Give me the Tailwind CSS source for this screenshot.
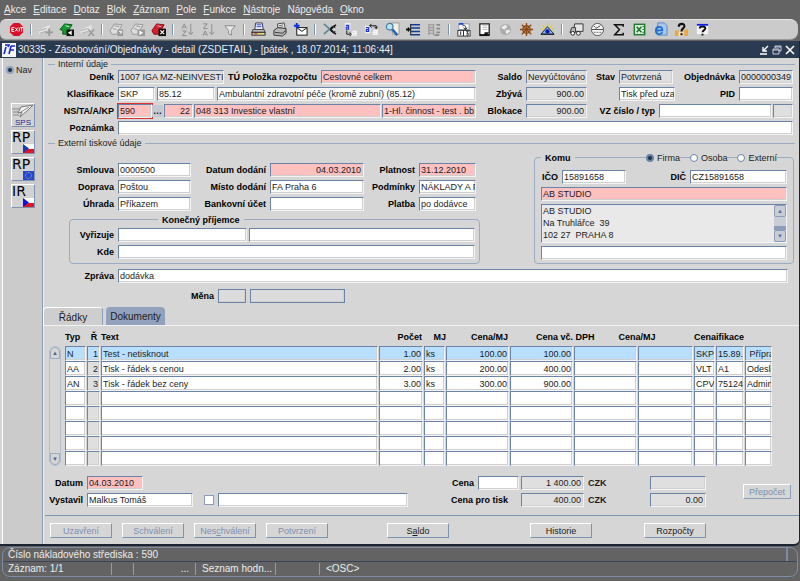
<!DOCTYPE html>
<html lang="cs">
<head>
  <meta charset="UTF-8" />
  <meta name="viewport" content="width=device-width, initial-scale=1.0" />
  <title>Zásobování/Objednávky - detail</title>
  <script src="https://cdn.jsdelivr.net/npm/@tailwindcss/browser@4"></script>
</head>

<body class="min-h-screen bg-[#636363] font-['Liberation_Sans',Arial,sans-serif] text-[9px] leading-3 text-[#1c1c1c] [&_u]:underline-offset-1">

  <!-- Menu -->
  <nav class="flex items-center gap-[7px] h-[19px] pl-1 text-[10px] text-[#ececec]">
    <a href="#"><u>A</u>kce</a>
    <a href="#"><u>E</u>ditace</a>
    <a href="#"><u>D</u>otaz</a>
    <a href="#"><u>B</u>lok</a>
    <a href="#"><u>Z</u>áznam</a>
    <a href="#"><u>P</u>ole</a>
    <a href="#"><u>F</u>unkce</a>
    <a href="#"><u>N</u>ástroje</a>
    <a href="#">Náp<u>o</u>věda</a>
    <a href="#"><u>O</u>kno</a>
  </nav>

  <!-- Toolbar -->
  <div class="flex items-center h-[21px] mr-[2px] pl-[6px] bg-[#cbcbcb] rounded-l-md rounded-r-lg border-y border-t-[#e6e6e6] border-b-[#9a9a9a] [&_button]:w-[21px] [&_button]:shrink-0 [&_button]:flex [&_button]:justify-center [&_svg]:w-[15px] [&_svg]:h-[15px] [&_hr]:w-[2px] [&_hr]:h-[11px] [&_hr]:mx-[3px] [&_hr]:border-0 [&_hr]:border-l [&_hr]:border-[#7d93b2] [&_hr]:bg-white [&_hr]:shrink-0">
    <button aria-label="Exit"><svg viewBox="0 0 16 16"><path d="M5 1h6l4 4v6l-4 4H5l-4-4V5z" fill="#d8102a"/><path d="M3 6h2.500M3 8h2M3 10h2.500M3 6v4M6.500 6l3 4M9.500 6l-3 4M11 6v4M12 6h3M13.500 6v4" stroke="#fff" fill="none"/></svg></button>
    <hr>
    <button aria-label="Vložit záznam"><svg viewBox="0 0 16 16"><path d="M1 8l12-5-1 5-11 5z" fill="#e4e4e4"/><path d="M1 9l8-2M2 12l6-2" stroke="#aaa"/><path d="M12 7v8M8 11h8" stroke="#9a9a9a" stroke-width="2"/></svg></button>
    <button aria-label="Nový záznam"><svg viewBox="0 0 16 16"><path d="M1 8l5-6 8 1-2 3-4 7H4V9z" fill="#159a32" stroke="#0b5a1c"/><path d="M7 4l4 1" stroke="#d8ffd8"/><rect x="8" y="8" width="8" height="7" fill="#111"/><path d="M13.500 9v5l-4-2.500z" fill="#fff"/></svg></button>
    <button aria-label="Smazat záznam"><svg viewBox="0 0 16 16"><path d="M1 8l12-5-1 5-11 5z" fill="#e4e4e4"/><path d="M1 9l8-2M2 12l6-2" stroke="#aaa"/><path d="M9 8l6 7M15 8l-6 7" stroke="#999" stroke-width="1.500"/></svg></button>
    <hr>
    <button aria-label="Zadat dotaz"><svg viewBox="0 0 16 16"><path d="M1 9l5-7 8 1-3 5-3 5H3z" fill="#ddd" stroke="#999"/><path d="M6 4l5 1M4 7l4 1" stroke="#999"/><rect x="9" y="8" width="6" height="7" fill="#999"/><path d="M10.500 10h3v1.500h-1.500v1" stroke="#fff" fill="none"/></svg></button>
    <button aria-label="Provést dotaz"><svg viewBox="0 0 16 16"><path d="M1 9l5-7 8 1-3 5-3 5H3z" fill="#ddd" stroke="#999"/><path d="M6 4l5 1M4 7l4 1" stroke="#999"/><rect x="8" y="8" width="8" height="7" fill="#999"/><path d="M10 9v5l4-2.500z" fill="#fff"/></svg></button>
    <button aria-label="Zrušit dotaz"><svg viewBox="0 0 16 16"><path d="M1 9l5-7 8 1-3 5-3 5H3z" fill="#d8202c" stroke="#8b0f18"/><path d="M7 4l4 1" stroke="#ffc0c0"/><rect x="8" y="7" width="8" height="8" fill="#111"/><path d="M10 9l4 4M14 9l-4 4" stroke="#fff" stroke-width="1.300"/></svg></button>
    <hr>
    <button aria-label="Třídit vzestupně"><svg viewBox="0 0 16 16" fill="none" stroke="#8c8c8c"><path d="M2 7l2.500-5L7 7M3 5.500h3M2.500 9.500h4l-4 5h4.500M11.500 2v11M9 10.500l2.500 3 2.500-3"/></svg></button>
    <button aria-label="Třídit sestupně"><svg viewBox="0 0 16 16" fill="none" stroke="#8c8c8c"><path d="M2.500 2h4l-4 5h4.500M2 14.500l2.500-5 2.500 5M3 13h3M11.500 2v11M9 10.500l2.500 3 2.500-3"/></svg></button>
    <button aria-label="Filtr"><svg viewBox="0 0 16 16"><path d="M3 4h11l-4 5v5l-3-1.500V9z" fill="#e8e8e8" stroke="#888"/></svg></button>
    <hr>
    <button aria-label="Tisk"><svg viewBox="0 0 16 16"><path d="M5 1h7l1 7H4z" fill="#eef" stroke="#335"/><path d="M6 3h5M6 5h5" stroke="#24c"/><path d="M2 8h12l1 3H1z" fill="#bbb" stroke="#444"/><rect x="1" y="11" width="14" height="3" fill="#e8e3c4" stroke="#222"/><path d="M3 12.500h4" stroke="#d22"/><path d="M8 12.500h4" stroke="#dd0"/></svg></button>
    <button aria-label="Tisk obrazovky"><svg viewBox="0 0 16 16"><path d="M6 2l7-1 1 6-8 2z" fill="#fff" stroke="#444"/><path d="M7 4l5-1M7 6l5-1" stroke="#555"/><path d="M2 9l4-3 9 1v5l-4 3-9-1z" fill="#b9b9b9" stroke="#333"/><path d="M3 11l8 1M11 12l4-3" stroke="#333"/></svg></button>
    <button aria-label="Pošta"><svg viewBox="0 0 16 16"><rect x="4" y="6" width="11" height="8" fill="#fff" stroke="#111"/><path d="M4 6l5.500 4L15 6" fill="none" stroke="#111"/><path d="M4 1v6M1 4h6" stroke="#1030e0" stroke-width="2"/></svg></button>
    <hr>
    <button aria-label="Vyjmout"><svg viewBox="0 0 16 16" fill="none"><path d="M2 2l9 8M2 13l9-8" stroke="#5d8a92" stroke-width="1.800"/><path d="M9 8l3-3M9 8l3 3" stroke="#111" stroke-width="2"/><path d="M12 5l3-2M12 11l3 2M12 4l2 2M12 12l2-2" stroke="#111" stroke-width="1.500"/></svg></button>
    <button aria-label="Kopírovat"><svg viewBox="0 0 16 16" fill="none"><rect x="2" y="1" width="6" height="7" fill="#eef"/><path d="M3 3.500h3v4H3.500v-2H6" stroke="#2438d8" stroke-width="1.300"/><path d="M4 9v4h4M7 11l2 2-2 2" stroke="#111"/><path d="M10 10h4v4h-4v-2h4" stroke="#f6f6f6" stroke-width="1.500"/></svg></button>
    <button aria-label="Vložit"><svg viewBox="0 0 16 16" fill="none"><rect x="1" y="4" width="6" height="8" fill="#eef"/><path d="M2 6h3v4H2.500V8H5" stroke="#2438d8" stroke-width="1.300"/><path d="M6 4h7v3M8 2L6 4l2 2M11 5l2 2 1.500-2" stroke="#111"/><path d="M10 9h4v4h-4v-2h4" stroke="#f6f6f6" stroke-width="1.500"/></svg></button>
    <button aria-label="Hledat"><svg viewBox="0 0 16 16"><path d="M7 1h8v12H8z" fill="#f1efe6" stroke="#999"/><circle cx="5" cy="5" r="3.500" fill="#b8e4f4" stroke="#4a7c9c" stroke-width="1.300"/><path d="M8 8l5 6" stroke="#2060b8" stroke-width="2.500"/></svg></button>
    <button aria-label="Seznam"><svg viewBox="0 0 16 16"><path d="M5 3h10M5 6.500h10M5 10h10M5 13.500h10" stroke="#123c98" stroke-width="1.600"/><path d="M5 2v12" stroke="#111"/><path d="M0 7h2V5l3 3-3 3V9H0z" fill="#111"/></svg></button>
    <button aria-label="Strom"><svg viewBox="0 0 16 16"><path d="M2 2v12M7 2v12M2 3h5M2 6h5M2 9h5M2 12h5" stroke="#999" stroke-width="1.300"/><path d="M10 3h4M10 7h4M10 11h4M8 14h5" stroke="#8a8a8a" stroke-width="1.800"/></svg></button>
    <hr>
    <button aria-label="Přepočet řádků"><svg viewBox="0 0 16 16"><path d="M3 2h11v6H3z" fill="#fff" stroke="#8a98b0"/><path d="M3 2h5" stroke="#1d4ed0" stroke-width="2"/><rect x="2" y="9" width="13" height="6" fill="#fff" stroke="#333"/><path d="M5 10v4M8 9v6M11 10h2l-1.500 2h1.500v2h-2" stroke="#222" fill="none"/><path d="M7 4c3-1 4 1 3 4M8 6l2 2 2-2" stroke="#111" fill="none"/></svg></button>
    <button aria-label="Poznámky"><svg viewBox="0 0 16 16"><path d="M3 2h10v12H3z" fill="#fff" stroke="#222" stroke-width="1.400"/><path d="M8 11h5l-3 3H8z" fill="#111"/><path d="M6 4h5M6 6h5M6 8h5" stroke="#bbb"/><path d="M3 14h10" stroke="#111" stroke-width="2"/></svg></button>
    <button aria-label="Web"><svg viewBox="0 0 16 16"><circle cx="8" cy="8" r="6" fill="#adadad"/><path d="M4 5l4-2 2 2-3 3-3-1zM8 9l4-1 1 2-4 3z" fill="#ececec"/></svg></button>
    <button aria-label="Kormidlo"><svg viewBox="0 0 16 16" fill="none" stroke="#8a4a12" stroke-width="1.400"><circle cx="8" cy="8" r="4"/><circle cx="8" cy="8" r="1"/><path d="M8 1v14M1 8h14M3 3l10 10M13 3L3 13"/></svg></button>
    <button aria-label="Náhled"><svg viewBox="0 0 16 16"><path d="M8 1v3M3 3l2 3M13 3l-2 3M1 7l2 1M15 7l-2 1" stroke="#e8d000" stroke-width="1.300"/><path d="M1 13L8 5l7 8z" fill="#8fb4f0" stroke="#123"/><circle cx="8" cy="10" r="2.300" fill="#0818a8"/><path d="M1 13h14" stroke="#111"/></svg></button>
    <hr>
    <button aria-label="Doprava"><svg viewBox="0 0 16 16"><path d="M6 2h9v8H5z" fill="#e6e6e6" stroke="#333"/><path d="M3 6h4v5H1z" fill="#bbb" stroke="#333"/><circle cx="4" cy="12" r="2" fill="#fff" stroke="#222"/><circle cx="10" cy="12" r="2" fill="#fff" stroke="#222"/></svg></button>
    <button aria-label="Měření"><svg viewBox="0 0 16 16"><circle cx="8" cy="8" r="6.500" fill="#f4f4f4" stroke="#555"/><path d="M2 8h12M6 7l5-3M4 4l2 2" stroke="#444"/><path d="M4 11h2M7 11h2M10 11h2" stroke="#666"/></svg></button>
    <button aria-label="Součet"><svg viewBox="0 0 16 16"><path d="M13 5V3H4l5 5-5 5.500h9v-2" fill="none" stroke="#111" stroke-width="1.600"/></svg></button>
    <button aria-label="Excel"><svg viewBox="0 0 16 16"><rect x="2.500" y="2.500" width="11" height="11" fill="#e7f4e6" stroke="#1e7a2c" stroke-width="1.600"/><path d="M5 5l5 6M10 5l-5 6" stroke="#1e7a2c" stroke-width="1.800"/><path d="M11 5h2M11 8h2M11 11h2" stroke="#1e7a2c"/></svg></button>
    <button aria-label="Prohlížeč"><svg viewBox="0 0 16 16"><path d="M5 1h7l3 3v10H5z" fill="#a9c6ec" stroke="#5a88c8"/><path d="M3 9h7c0-5-7-5-7 0s5 5 7 2" fill="none" stroke="#1d6fd0" stroke-width="1.800"/></svg></button>
    <button aria-label="Nápověda k bloku"><svg viewBox="0 0 16 16"><path d="M1 9h4v6H1zM11 8h4v7h-4z" fill="#eca73e"/><path d="M5 11h5v4H5z" fill="#f6e6c0"/><path d="M5 5c0-4 7-4 6 0-.5 2-3 2-3 5M8 12v2" stroke="#111" stroke-width="2.200" fill="none"/></svg></button>
    <button aria-label="Nápověda"><svg viewBox="0 0 16 16"><rect x="2" y="2" width="12" height="11" fill="#f4f4f4"/><path d="M2 3h12" stroke="#1220e8" stroke-width="2"/><path d="M5 7c0-3 6-3 6 0-.5 2-3 2-3 4M8 12.500v2" stroke="#111" stroke-width="2" fill="none"/></svg></button>
  </div>

  <!-- Window -->
  <div class="mt-px border-r border-b-2 border-[#1d2533] rounded-br-md bg-[#d6d6d6]">
    <header class="flex items-center gap-[2px] h-[17px] pl-[2px] pr-1 bg-[#2a3a50] text-white text-[10px]">
      <svg class="w-[14px] h-[14px]" viewBox="0 0 14 14"><rect width="14" height="14" fill="#f4f6ff"/><path d="M4 4L2 11M4 1.500v1M7 11L9 3M9 3h4M8 7h4M3 2h4L6 4" stroke="#1426d8" stroke-width="1.600" fill="none"/></svg>
      <h1 class="flex-1 whitespace-nowrap text-[#e8ecf2]">30335 - Zásobování/Objednávky - detail (ZSDETAIL) - [pátek , 18.07.2014; 11:06:44]</h1>
      <button aria-label="Minimalizovat"><svg class="w-[10px] h-[10px]" viewBox="0 0 10 10" fill="none" stroke="#fff"><path d="M9 1L5 5M4 2v4h4M1 9h7" stroke-width="1.400"/></svg></button>
      <button aria-label="Obnovit" class="mx-px"><svg class="w-[10px] h-[10px]" viewBox="0 0 10 10" fill="none" stroke="#ccd"><path d="M3 3V1h6v5H7M1 4h6v5H1zM1 5h6M3 2h6"/></svg></button>
      <button aria-label="Zavřít"><svg class="w-[10px] h-[10px]" viewBox="0 0 10 10" stroke="#fff" stroke-width="1.600"><path d="M1 1l8 8M9 1L1 9"/></svg></button>
    </header>

    <div class="flex">
      <!-- Side panel -->
      <aside class="w-[41px] shrink-0 ml-[2px] pl-[3px] pt-[6px] bg-[#cbcbcb] border-l border-l-white border-r border-r-[#8b9db8] shadow-[1px_0_0_#eee]">
        <label class="flex items-center gap-[2px] h-3"><input type="radio" name="nav" checked class="appearance-none w-[8px] h-[8px] rounded-full border-2 border-[#8fa2be] bg-[#1e3050]">Nav</label>
        <div class="flex flex-col gap-[3px] mt-[27px] ml-[5px] w-6 [&_button]:h-6 [&_button]:border [&_button]:border-t-white [&_button]:border-l-white [&_button]:border-b-[#8093b0] [&_button]:border-r-[#8093b0] [&_button]:bg-[#d2d2d2] [&_svg]:absolute [&_svg]:right-0 [&_svg]:bottom-0 [&_svg]:w-[11px] [&_svg]:h-[9px] [&_button]:relative [&_button]:flex [&_button]:items-start [&_button]:text-black">
          <button aria-label="SPS"><svg class="w-[22px]! h-[14px]! bottom-[8px]!" viewBox="0 0 22 14"><path d="M21 1L9 3l-3 6 4-1-2 5 8-7z" fill="#f4f4f4" stroke="#777"/><path d="M0 5h8M1 8h5M1 11h6M9 8l8-5" stroke="#888"/></svg><span class="mt-auto w-full text-center text-[8px] leading-[7px] text-[#1c2a90]">SPS</span></button>
          <button class="text-[14px] leading-[13px] font-['DejaVu_Sans']">RP<svg viewBox="0 0 11 9"><path d="M0 0h11v5H0z" fill="#fff"/><path d="M0 5h11v4H0z" fill="#d81828"/><path d="M0 0l6 4.500L0 9z" fill="#1c38b8"/></svg></button>
          <button class="text-[14px] leading-[13px] font-['DejaVu_Sans']">RP<svg viewBox="0 0 11 9"><path d="M0 0h11v9H0z" fill="#2448d0"/><circle cx="5.500" cy="4.500" r="3" fill="none" stroke="#c8c860" stroke-dasharray="1 1.300"/></svg></button>
          <button class="text-[14px] leading-[13px] font-['DejaVu_Sans']">IR<svg viewBox="0 0 11 9"><path d="M0 0h11v5H0z" fill="#fff"/><path d="M0 5h11v4H0z" fill="#d81828"/><path d="M0 0l6 4.500L0 9z" fill="#1010e8"/></svg></button>
        </div>
      </aside>

      <!-- Form -->
      <main class="flex-1 min-w-0 [&_.fld]:h-[14px] [&_.fld]:min-w-0 [&_.fld]:pl-px [&_.fld]:border [&_.fld]:border-t-[#6b83a6] [&_.fld]:border-l-[#6b83a6] [&_.fld]:border-b-[#f4f4f4] [&_.fld]:border-r-[#f4f4f4] [&_.fld]:shadow-[inset_-1px_-1px_0_#d0d0d0] [&_.lbl]:font-bold [&_.lbl]:text-right [&_.lbl]:pr-1 [&_.lbl]:whitespace-nowrap [&_.lbl]:shrink-0 [&_.lbl]:text-black">

        <div class="flex items-center gap-[3px] h-3 pl-[5px] pr-1"><span class="w-[7px] h-px bg-[#9aabc2]"></span>Interní údaje<span class="flex-1 h-px bg-[#9aabc2]"></span></div>
        <section class="flex flex-col gap-[3px] pr-[6px]">
          <div class="flex items-center">
            <label for="denik" class="lbl w-[75px]">Deník</label>
            <input id="denik" class="fld w-[106px] bg-[#dfdfdf]" value="1007 IGA MZ-NEINVESTI">
            <label for="tu" class="lbl w-[97px]">TÚ Položka rozpočtu</label>
            <input id="tu" class="fld flex-1 bg-[#ffc0c0]" value="Cestovné celkem">
            <label for="saldo" class="lbl w-[50px]">Saldo</label>
            <input id="saldo" class="fld w-[61px] bg-[#dfdfdf]" value="Nevyúčtováno">
            <label for="stav" class="lbl w-8">Stav</label>
            <input id="stav" class="fld w-[54px] bg-[#dfdfdf]" value="Potvrzená">
            <label for="obj" class="lbl w-[66px]">Objednávka</label>
            <input id="obj" class="fld w-[54px] bg-[#dfdfdf]" value="0000000349">
          </div>
          <div class="flex items-center">
            <label for="klas" class="lbl w-[75px]">Klasifikace</label>
            <input id="klas" class="fld w-[37px] mr-[2px] bg-white" value="SKP">
            <input aria-label="Kód klasifikace" class="fld w-[58px] mr-[2px] bg-white" value="85.12">
            <input aria-label="Název klasifikace" class="fld flex-1 bg-white" value="Ambulantní zdravotní péče (kromě zubní) (85.12)">
            <label for="zbyva" class="lbl w-[50px]">Zbývá</label>
            <input id="zbyva" class="fld w-[61px] pr-[2px] bg-[#dfdfdf] text-right" value="900.00">
            <input aria-label="Stav tisku" class="fld w-14 ml-8 bg-white" value="Tisk před uza">
            <label for="pid" class="lbl w-16">PID</label>
            <input id="pid" class="fld w-[54px] bg-white">
          </div>
          <div class="flex items-center">
            <label for="ns" class="lbl w-[75px]">NS/TA/A/KP</label>
            <input id="ns" class="fld w-[34px] bg-[#ffc0c0] outline outline-[#e03030]" value="590">
            <button class="w-[11px] h-3 mr-px bg-[#c4c8d0] font-bold leading-[6px]" aria-label="Výběr">…</button>
            <input aria-label="TA" class="fld w-[29px] mr-px pr-[2px] bg-[#ffc0c0] text-right" value="22">
            <input aria-label="A" class="fld flex-1 mr-px bg-[#ffc0c0]" value="048 313 Investice vlastní">
            <input aria-label="KP" class="fld w-[94px] bg-[#ffc0c0]" value="1-Hl. činnost - test . bb">
            <label for="blok" class="lbl w-[50px]">Blokace</label>
            <input id="blok" class="fld w-[61px] pr-[2px] bg-[#dfdfdf] text-right" value="900.00">
            <label for="vz" class="lbl w-[72px]">VZ číslo / typ</label>
            <input id="vz" class="fld w-[113px] mr-px bg-white">
            <input aria-label="Typ VZ" class="fld w-5 bg-[#dfdfdf]">
          </div>
          <div class="flex items-center">
            <label for="pozn" class="lbl w-[75px]">Poznámka</label>
            <input id="pozn" class="fld flex-1 bg-white">
          </div>
        </section>

        <div class="flex items-center gap-[3px] h-3 mt-[2px] pl-[5px] pr-1"><span class="w-[7px] h-px bg-[#9aabc2]"></span>Externí tiskové údaje<span class="flex-1 h-px bg-[#9aabc2]"></span></div>
        <div class="flex gap-[54px] pr-[5px]">
          <section class="flex-1 min-w-0 pt-[14px]">
            <div class="flex flex-col gap-[3px] pr-1">
              <div class="flex items-center">
                <label for="smlouva" class="lbl w-[75px]">Smlouva</label>
                <input id="smlouva" class="fld w-[73px] bg-white" value="0000500">
                <label for="dodani" class="lbl w-[79px]">Datum dodání</label>
                <input id="dodani" class="fld flex-1 pr-[2px] bg-[#ffc0c0] text-right" value="04.03.2010">
                <label for="platnost" class="lbl w-[55px]">Platnost</label>
                <input id="platnost" class="fld w-[57px] bg-[#ffc0c0]" value="31.12.2010">
              </div>
              <div class="flex items-center">
                <label for="doprava" class="lbl w-[75px]">Doprava</label>
                <input id="doprava" class="fld w-[73px] bg-white" value="Poštou">
                <label for="misto" class="lbl w-[79px]">Místo dodání</label>
                <input id="misto" class="fld flex-1 bg-white" value="FA Praha 6">
                <label for="podm" class="lbl w-[55px]">Podmínky</label>
                <input id="podm" class="fld w-[57px] bg-white" value="NÁKLADY A P">
              </div>
              <div class="flex items-center">
                <label for="uhrada" class="lbl w-[75px]">Úhrada</label>
                <input id="uhrada" class="fld w-[73px] bg-white" value="Příkazem">
                <label for="ucet" class="lbl w-[79px]">Bankovní účet</label>
                <input id="ucet" class="fld flex-1 bg-white">
                <label for="platba" class="lbl w-[55px]">Platba</label>
                <input id="platba" class="fld w-[57px] bg-white" value="po dodávce">
              </div>
            </div>
            <div class="relative flex flex-col gap-[3px] mt-2 ml-[26px] pt-2 pb-1 pr-1 border border-[#9aabc2] rounded-[4px]">
              <span class="absolute -top-[6px] left-[88px] px-1 bg-[#d6d6d6] font-bold text-black">Konečný příjemce</span>
              <div class="flex items-center">
                <label for="vyrizuje" class="lbl w-12">Vyřizuje</label>
                <input id="vyrizuje" class="fld w-[129px] mr-[2px] bg-white">
                <input aria-label="Jméno" class="fld flex-1 bg-white">
              </div>
              <div class="flex items-center">
                <label for="kde" class="lbl w-12">Kde</label>
                <input id="kde" class="fld flex-1 bg-white">
              </div>
            </div>
          </section>

          <section class="relative w-[260px] shrink-0 flex flex-col gap-[3px] mt-2 pt-3 px-[6px] border border-[#9aabc2] rounded-[4px]">
            <span class="absolute -top-[6px] left-[6px] px-1 bg-[#d6d6d6] font-bold text-black">Komu</span>
            <div class="absolute -top-[6px] right-4 flex gap-[10px] [&_label]:flex [&_label]:items-center [&_label]:gap-[3px] [&_label]:bg-[#d6d6d6] [&_input]:appearance-none [&_input]:w-2 [&_input]:h-2 [&_input]:rounded-full [&_input]:border [&_input]:border-[#6b83a6] [&_input]:bg-white [&_input]:checked:bg-[#1e3050] [&_input]:checked:border-2">
              <label><input type="radio" name="komu" checked>Firma</label>
              <label><input type="radio" name="komu">Osoba</label>
              <label><input type="radio" name="komu">Externí</label>
            </div>
            <div class="flex items-center">
              <label for="ico" class="lbl w-[21px]">IČO</label>
              <input id="ico" class="fld w-16 bg-white" value="15891658">
              <label for="dic" class="lbl flex-1">DIČ</label>
              <input id="dic" class="fld w-[97px] bg-white" value="CZ15891658">
            </div>
            <input aria-label="Firma" class="fld w-full bg-[#ffc0c0]" value="AB STUDIO">
            <div class="flex h-[39px] border border-t-[#6b83a6] border-l-[#6b83a6] border-[#f4f4f4] bg-[#e9e9e9]">
              <textarea aria-label="Adresa" class="flex-1 px-px resize-none overflow-hidden leading-3">AB STUDIO
Na Truhlářce  39
102 27  PRAHA 8</textarea>
              <div class="flex flex-col w-3 bg-[#c9ced6] [&_button]:h-3 [&_button]:border [&_button]:border-[#8b9db8] [&_button]:rounded-[2px] [&_button]:text-[6px] [&_button]:leading-[8px] [&_button]:text-[#5b7396]">
                <button aria-label="Nahoru">▲</button>
                <span class="flex-1 border-b-4 border-[#8b9db8]"></span>
                <button aria-label="Dolů">▼</button>
              </div>
            </div>
            <input aria-label="Doplněk adresy" class="fld w-full bg-white">
          </section>
        </div>

        <div class="flex items-center mt-[5px] pr-[11px]">
          <label for="zprava" class="lbl w-[75px]">Zpráva</label>
          <input id="zprava" class="fld flex-1 bg-white" value="dodávka">
        </div>
        <div class="flex items-center mt-[6px]">
          <label for="mena" class="lbl w-[175px]">Měna</label>
          <input id="mena" class="fld w-7 mr-1 bg-[#dcdcdc] border-r-[#6b83a6]! border-b-[#6b83a6]!">
          <input aria-label="Název měny" class="fld w-[95px] bg-[#dcdcdc] border-r-[#6b83a6]! border-b-[#6b83a6]!">
        </div>

        <!-- Tabs -->
        <div class="flex items-end gap-[3px] mt-1 border-b border-[#f2f2f2] text-[10px]">
          <button class="w-[60px] h-[18px] pt-[2px] bg-[#cecece] border-t border-l border-white border-r border-r-[#8b9db8] rounded-t-[4px]">Řádky</button>
          <button class="w-[59px] h-[18px] pt-[2px] bg-[#92a2bc] rounded-t-[4px]">Dokumenty</button>
        </div>

        <!-- Lines -->
        <div class="flex pl-[6px] pr-[26px]">
          <div class="flex flex-col w-3 mt-[20px] mr-1 shrink-0 border border-[#b4bfce] rounded-md [&_button]:h-3 [&_button]:border [&_button]:border-[#9aabc2] [&_button]:text-[6px] [&_button]:leading-[9px] [&_button]:text-[#4c668c]">
            <button class="rounded-t-md" aria-label="Nahoru">▲</button>
            <span class="flex-1"></span>
            <button class="rounded-b-md" aria-label="Dolů">▼</button>
          </div>
          <table class="flex-1 w-full table-fixed">
            <colgroup>
              <col class="w-[22px]"><col class="w-[14px]"><col><col class="w-[45px]"><col class="w-[22px]"><col class="w-16"><col class="w-16"><col class="w-16"><col class="w-[56px]"><col class="w-[22px]"><col class="w-[29px]"><col class="w-7">
            </colgroup>
            <thead>
              <tr class="h-5 text-left whitespace-nowrap text-black [&_th]:pt-[2px]">
                <th>Typ</th>
                <th class="text-center">Ř</th>
                <th>Text</th>
                <th class="text-right pr-[2px]">Počet</th>
                <th class="text-right">MJ</th>
                <th class="text-right pr-[2px]">Cena/MJ</th>
                <th colspan="3"><div class="flex gap-6 pl-[26px]"><span>Cena vč. DPH</span><span>Cena/MJ</span></div></th>
                <th colspan="3">Cenaifikace</th>
              </tr>
            </thead>
            <tbody id="lines"></tbody>
          </table>
        </div>

        <!-- Footer fields -->
        <div class="flex items-center mt-[10px] pr-2">
          <div class="flex-1 flex flex-col gap-[3px]">
            <div class="flex items-center">
              <label for="datum" class="lbl w-11">Datum</label>
              <input id="datum" class="fld w-14 bg-[#ffc0c0]" value="04.03.2010">
            </div>
            <div class="flex items-center">
              <label for="vystavil" class="lbl w-11">Vystavil</label>
              <input id="vystavil" class="fld w-[106px] bg-white" value="Malkus Tomáš">
              <input type="checkbox" aria-label="Příznak" class="appearance-none w-[10px] h-[10px] ml-[11px] mr-1 bg-white border border-[#8b9db8]">
              <input aria-label="Text příznaku" class="fld w-[190px] bg-white">
            </div>
          </div>
          <div class="flex flex-col gap-[3px]">
            <div class="flex items-center">
              <label for="cena" class="lbl w-[27px]">Cena</label>
              <input id="cena" class="fld w-[41px] mr-[2px] bg-white">
              <input aria-label="Cena celkem" class="fld w-[63px] pr-[2px] bg-[#dfdfdf] text-right" value="1 400.00">
              <span class="w-[66px] pl-1 font-bold">CZK</span>
              <input aria-label="Cena v měně" class="fld w-14 bg-[#dfdfdf]">
            </div>
            <div class="flex items-center">
              <label for="tisk" class="w-[70px] font-bold text-black">Cena pro tisk</label>
              <input id="tisk" class="fld w-[63px] pr-[2px] bg-[#dfdfdf] text-right" value="400.00">
              <span class="w-[66px] pl-1 font-bold">CZK</span>
              <input aria-label="Cena pro tisk v měně" class="fld w-14 pr-[2px] bg-[#dfdfdf] text-right" value="0.00">
            </div>
          </div>
          <button class="w-12 h-[15px] ml-[37px] border border-t-white border-l-white border-[#8b9db8] text-[#7d90ae]">Přepočet</button>
        </div>

        <!-- Actions -->
        <div class="flex mt-2 ml-[2px] pl-[5px] pt-[7px] pb-[6px] border-t border-[#7d93b2] [&_button]:w-[62px] [&_button]:h-[15px] [&_button]:border [&_button]:border-t-white [&_button]:border-l-white [&_button]:border-b-[#7d93b2] [&_button]:border-r-[#7d93b2]">
          <div class="flex gap-[10px] text-[#7d90ae]">
            <button>Uzavření</button>
            <button>Schválení</button>
            <button>Nes<u>c</u>hválení</button>
            <button>Potvrzení</button>
          </div>
          <button class="ml-[59px]">S<u>a</u>ldo</button>
          <button class="ml-[81px]">Historie</button>
          <button class="ml-[52px]">Rozpočty</button>
        </div>
      </main>
    </div>
  </div>

  <!-- Status bar -->
  <footer class="mt-px mx-[2px] border border-[#7f8da3] rounded-lg text-[10px] text-[#ececec]">
    <div class="flex items-center h-[14px] pl-[5px] border-b border-[#3a4558]"><span class="flex-1">Číslo nákladového střediska : 590</span><span class="w-[11px] h-full border-l-2 border-[#7f8da3]"></span></div>
    <div class="flex items-center h-[14px] [&_span]:border-r [&_span]:border-[#8b9db8] [&_span]:pr-[6px]">
      <span class="w-[109px] pl-[5px]">Záznam: 1/1</span>
      <span class="w-[22px] h-3"></span>
      <span class="w-[62px] text-right">...</span>
      <span class="w-[80px] pl-[6px] pr-0! whitespace-nowrap">Seznam hodn...</span>
      <span class="w-11 h-3"></span>
      <p class="pl-[6px]">&lt;OSC&gt;</p>
    </div>
  </footer>

  <script>
    const rows = [
      ["N", "1", "Test - netisknout", "1.00", "ks", "100.00", "100.00", "", "", "SKP", "15.89.", " Přípra"],
      ["AA", "2", "Tisk - řádek s cenou", "2.00", "ks", "200.00", "400.00", "", "", "VLT", "A1", "Odesla"],
      ["AN", "3", "Tisk - řádek bez ceny", "3.00", "ks", "300.00", "900.00", "", "", "CPV", "75124", "Admin"],
      [], [], [], [], [],
    ];
    const names = ["Typ", "Řádek", "Text", "Počet", "MJ", "Cena/MJ", "Cena vč. DPH", "Cena", "Cena/MJ", "Klasifikace", "Kód", "Název"];
    const rightAligned = [1, 3, 5, 6];

    document.getElementById("lines").innerHTML = rows.map((row, r) =>
      "<tr>" + names.map((name, c) => {
        const bg = r === 0 ? "bg-[#b8dfff]" : c === 1 ? "bg-[#dfdfdf]" : "bg-white";
        const align = rightAligned.includes(c) ? "text-right pr-px" : "text-left";
        return `<td class="h-[15px] p-0 pr-px"><input aria-label="${name} ${r + 1}" class="fld block w-full h-[15px]! ${bg} ${align}" value="${row[c] || ""}"></td>`;
      }).join("") + "</tr>"
    ).join("");
  </script>
</body>
</html>
